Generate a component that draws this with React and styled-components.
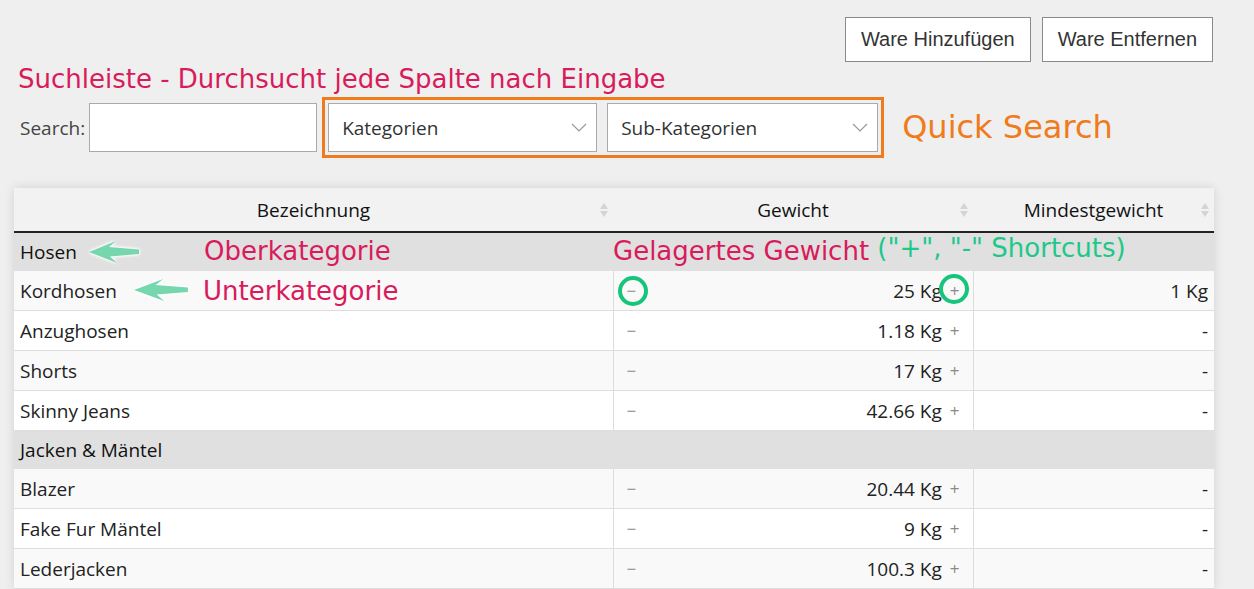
import React from "react";
import styled, { createGlobalStyle } from "styled-components";

const GlobalStyle = createGlobalStyle`
  body {
    margin: 0;
    background: #efefef;
    font-family: "Open Sans", "Noto Sans", sans-serif;
    color: #222;
  }
`;

const Page = styled.div`
  width: 1254px;
  height: 589px;
  overflow: hidden;
  padding-top: 17px;
  box-sizing: border-box;
`;

const TopBar = styled.div`
  display: flex;
  justify-content: flex-end;
  gap: 11px;
  padding-right: 41px;
`;

const Button = styled.button`
  height: 45px;
  padding: 0 15px;
  background: #fff;
  border: 1px solid #8a8a8a;
  font-family: "Liberation Sans", Arial, sans-serif;
  font-size: 20px;
  color: #333;
`;

const Note = styled.div`
  font-family: "DejaVu Sans", Verdana, sans-serif;
  font-size: ${(p) => p.$size || 26}px;
  color: ${(p) => p.$color || "#d81b5a"};
  white-space: nowrap;
  line-height: 1.2;
`;

const Heading = styled(Note)`
  margin: 2px 0 0 18px;
  height: 30px;
`;

const SearchRow = styled.div`
  display: flex;
  align-items: center;
  margin-top: 3px;
  padding-left: 20px;
`;

const Label = styled.label`
  font-size: 19px;
  color: #444;
  margin-right: 4px;
`;

const Input = styled.input`
  width: 228px;
  height: 49px;
  box-sizing: border-box;
  border: 1px solid #aaa;
  background: #fff;
`;

const QuickBox = styled.div`
  display: flex;
  gap: 10px;
  margin-left: 5px;
  padding: 3px;
  border: 3px solid #f07b1c;
`;

const Select = styled.div`
  width: ${(p) => p.$w}px;
  height: 49px;
  box-sizing: border-box;
  border: 1px solid #aaa;
  background: #fff;
  display: flex;
  align-items: center;
  justify-content: space-between;
  padding: 0 9px 0 13px;
  font-size: 19px;
  color: #333;
`;

const QuickNote = styled(Note)`
  margin-left: 18px;
`;

const TableWrap = styled.div`
  position: relative;
  margin: 30px 0 0 14px;
  width: 1200px;
  background: #fff;
  box-shadow: 0 0 10px rgba(0, 0, 0, 0.12);
`;

const Table = styled.table`
  width: 100%;
  border-collapse: collapse;
  table-layout: fixed;
  font-size: 19px;
`;

const Th = styled.th`
  position: relative;
  height: 43px;
  font-weight: 400;
  color: #111;
  background: #f2f2f2;
  border-bottom: 2px solid #222;
  padding: 0;
`;

const Sort = styled.span`
  position: absolute;
  right: 5px;
  top: 15px;
  display: flex;
  flex-direction: column;
  gap: 2px;
`;

const Row = styled.tr`
  background: ${(p) => (p.$alt ? "#f9f9f9" : "#fff")};
  border-bottom: 1px solid #ddd;
`;

const CatRow = styled.tr`
  background: #e0e0e0;
`;

const CatCell = styled.td`
  height: 38px;
  padding: 0 6px;
  color: #111;
  font-weight: 500;
`;

const Td = styled.td`
  height: 39px;
  padding: 0 6px;
  text-align: ${(p) => p.$align || "left"};
  border-left: ${(p) => (p.$first ? "none" : "1px solid #ddd")};
  color: #222;
`;

const WeightCell = styled.div`
  display: flex;
  align-items: center;
  justify-content: space-between;
  padding: 0 7px;
`;

const Value = styled.div`
  display: flex;
  align-items: center;
  gap: 8px;
`;

const Step = styled.span`
  color: #888;
  font-size: 17px;
`;

const Overlay = styled.div`
  position: absolute;
  left: ${(p) => p.$x}px;
  top: ${(p) => p.$y}px;
`;

const Ring = styled.div`
  position: absolute;
  left: ${(p) => p.$x}px;
  top: ${(p) => p.$y}px;
  width: 22px;
  height: 22px;
  border: 4px solid #16c47c;
  border-radius: 50%;
`;

const Chevron = () => (
  <svg width="16" height="9" viewBox="0 0 16 9">
    <path d="M1 1l7 7 7-7" fill="none" stroke="#999" strokeWidth="1.2" />
  </svg>
);

const SortIcon = () => (
  <Sort>
    <svg width="8" height="6" viewBox="0 0 8 6">
      <path d="M4 0l4 6H0z" fill="#d4d4d4" />
    </svg>
    <svg width="8" height="6" viewBox="0 0 8 6">
      <path d="M0 0h8L4 6z" fill="#d4d4d4" />
    </svg>
  </Sort>
);

const Arrow = ({ w = 52 }) => (
  <svg
    width={w}
    height="24"
    viewBox="0 0 52 24"
    preserveAspectRatio="none"
    style={{ filter: "drop-shadow(0 0 1.5px #fff) drop-shadow(0 0 1.5px #fff)" }}
  >
    <path d="M1 12L28 1L21 7L51 9.5V14L22 16.5L29 23Z" fill="#76d6ae" />
  </svg>
);

const groups = [
  {
    name: "Hosen",
    items: [
      { name: "Kordhosen", weight: "25 Kg", min: "1 Kg" },
      { name: "Anzughosen", weight: "1.18 Kg", min: "-" },
      { name: "Shorts", weight: "17 Kg", min: "-" },
      { name: "Skinny Jeans", weight: "42.66 Kg", min: "-" },
    ],
  },
  {
    name: "Jacken & Mäntel",
    items: [
      { name: "Blazer", weight: "20.44 Kg", min: "-" },
      { name: "Fake Fur Mäntel", weight: "9 Kg", min: "-" },
      { name: "Lederjacken", weight: "100.3 Kg", min: "-" },
    ],
  },
];

export default function App() {
  return (
    <Page>
      <GlobalStyle />
      <TopBar>
        <Button>Ware Hinzufügen</Button>
        <Button>Ware Entfernen</Button>
      </TopBar>
      <Heading>Suchleiste - Durchsucht jede Spalte nach Eingabe</Heading>
      <SearchRow>
        <Label>Search:</Label>
        <Input />
        <QuickBox>
          <Select $w={269}>
            Kategorien
            <Chevron />
          </Select>
          <Select $w={271}>
            Sub-Kategorien
            <Chevron />
          </Select>
        </QuickBox>
        <QuickNote $color="#f07b1c" $size={32}>
          Quick Search
        </QuickNote>
      </SearchRow>

      <TableWrap>
        <Table>
          <colgroup>
            <col style={{ width: 599 }} />
            <col style={{ width: 360 }} />
            <col style={{ width: 241 }} />
          </colgroup>
          <thead>
            <tr>
              <Th>
                Bezeichnung
                <SortIcon />
              </Th>
              <Th>
                Gewicht
                <SortIcon />
              </Th>
              <Th>
                Mindestgewicht
                <SortIcon />
              </Th>
            </tr>
          </thead>
          <tbody>
            {groups.map((g) => (
              <React.Fragment key={g.name}>
                <CatRow>
                  <CatCell colSpan={3}>{g.name}</CatCell>
                </CatRow>
                {g.items.map((it, i) => (
                  <Row key={it.name} $alt={i % 2 === 0}>
                    <Td $first>{it.name}</Td>
                    <Td>
                      <WeightCell>
                        <Step>−</Step>
                        <Value>
                          {it.weight}
                          <Step>+</Step>
                        </Value>
                      </WeightCell>
                    </Td>
                    <Td $align="right">{it.min}</Td>
                  </Row>
                ))}
              </React.Fragment>
            ))}
          </tbody>
        </Table>

        <Overlay $x={74} $y={52}>
          <Arrow />
        </Overlay>
        <Overlay $x={190} $y={48}>
          <Note>Oberkategorie</Note>
        </Overlay>
        <Overlay $x={119} $y={90}>
          <Arrow w={56} />
        </Overlay>
        <Overlay $x={189} $y={88}>
          <Note>Unterkategorie</Note>
        </Overlay>
        <Overlay $x={599} $y={48}>
          <Note>
            Gelagertes Gewicht{" "}
            <Note as="span" $color="#1ec888" style={{ position: "relative", top: -3 }}>
              ("+", "-" Shortcuts)
            </Note>
          </Note>
        </Overlay>
        <Ring $x={604} $y={88} />
        <Ring $x={925} $y={86} />
      </TableWrap>
    </Page>
  );
}
